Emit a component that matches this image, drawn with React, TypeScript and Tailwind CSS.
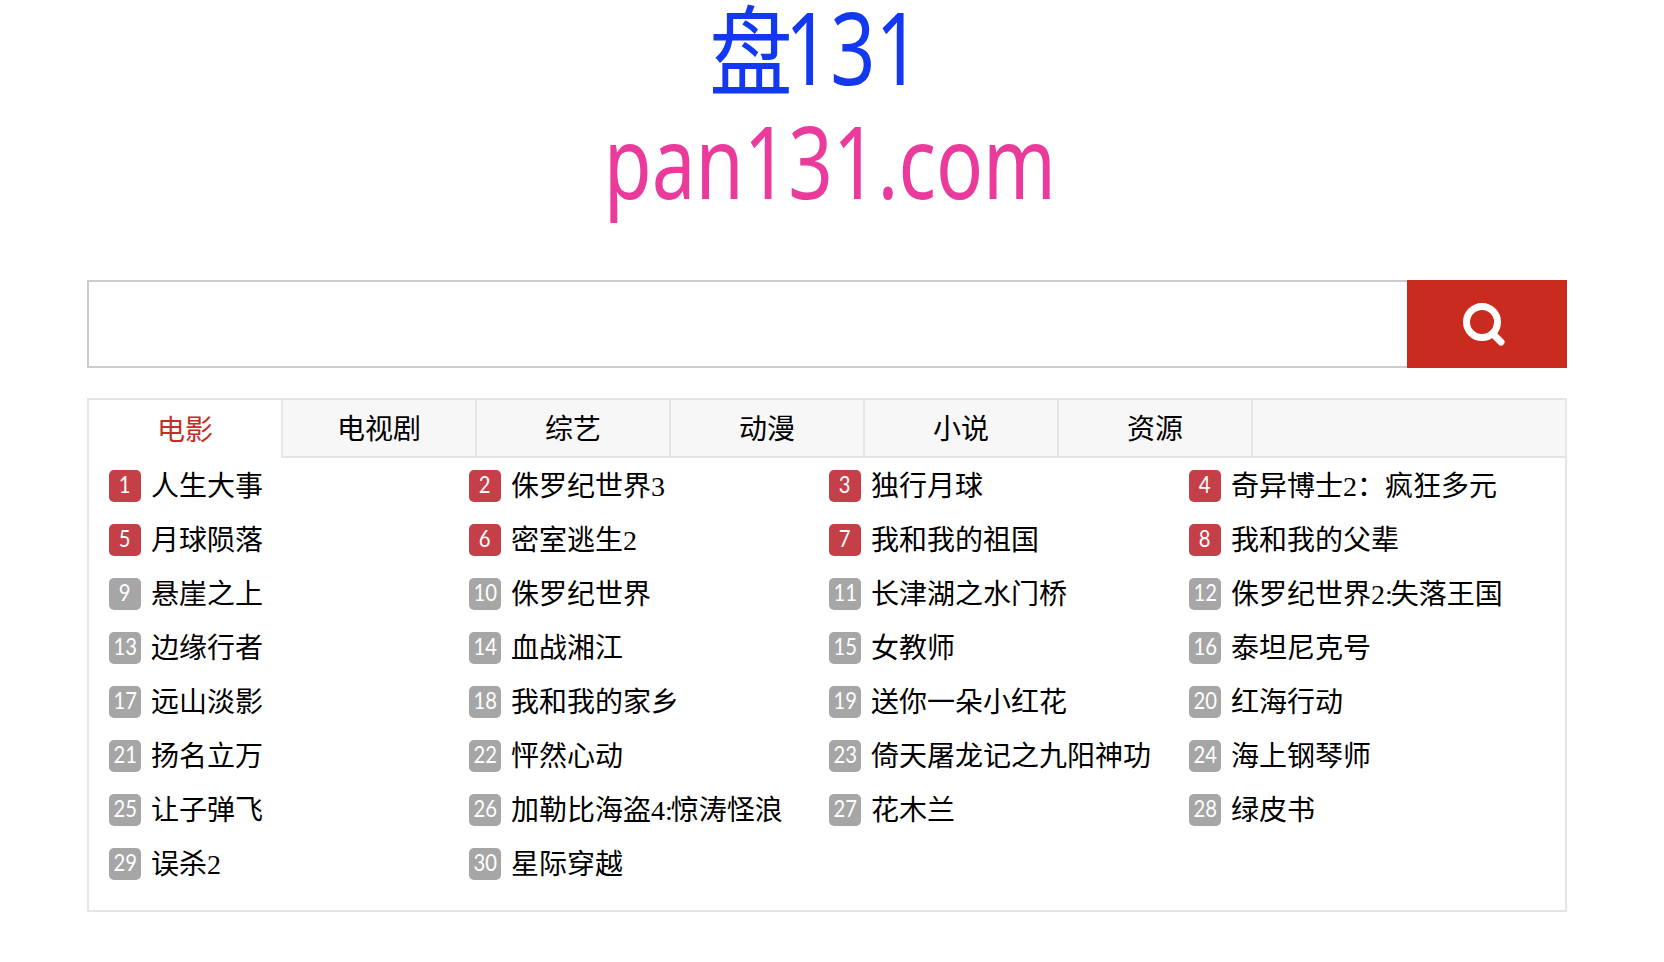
const titles = ["人生大事","侏罗纪世界3","独行月球","奇异博士2：疯狂多元","月球陨落","密室逃生2","我和我的祖国","我和我的父辈","悬崖之上","侏罗纪世界","长津湖之水门桥","侏罗纪世界2:失落王国","边缘行者","血战湘江","女教师","泰坦尼克号","远山淡影","我和我的家乡","送你一朵小红花","红海行动","扬名立万","怦然心动","倚天屠龙记之九阳神功","海上钢琴师","让子弹飞","加勒比海盗4:惊涛怪浪","花木兰","绿皮书","误杀2","星际穿越"];
const tabs = ["电影","电视剧","综艺","动漫","小说","资源"];

function Title({ text }: { text: string }) {
  const parts = text.split(":");
  if (parts.length === 1) return <>{text}</>;
  return (
    <>
      {parts[0]}
      <span className="mr-[-2px]">:</span>
      {parts[1]}
    </>
  );
}

export default function App() {
  return (
    <div className="h-[962px] w-[1664px] overflow-hidden bg-white font-['Liberation_Serif','Noto_Sans_CJK_SC',serif] text-black">
      <div className="flex h-[280px] flex-col items-center font-['Noto_Sans','Noto_Sans_CJK_SC',sans-serif]">
        <div className="mr-[41px] flex h-[100px] items-center text-[#1238f0]">
          <span className="mr-[-15px] inline-block origin-center scale-x-[0.85] text-[98px] leading-[100px]">盘</span>
          <span className="mr-[-36px] mb-[8px] inline-block origin-left scale-x-[0.79] text-[100px] leading-[100px]">131</span>
        </div>
        <div className="mt-[5px] mr-[4px] scale-x-[0.78] text-[100px] leading-[110px] text-[#ea3a9c]">pan131.com</div>
      </div>
      <div className="ml-[87px] flex h-[88px] w-[1480px]">
        <div className="flex-1 border-2 border-r-0 border-[#cccccc]" />
        <button className="flex w-[160px] items-center justify-center bg-[#c92b1e]">
          <svg width="48" height="48" viewBox="0 0 48 48" fill="none" stroke="white" strokeLinecap="round" className="ml-[-3px] mt-[4px]">
            <circle cx="20" cy="20" r="15.5" strokeWidth="7" />
            <path d="M31 32 L39 40" strokeWidth="7" />
          </svg>
        </button>
      </div>
      <div className="ml-[87px] mt-[30px] h-[514px] w-[1480px] border-2 border-[#e5e5e5]">
        <div className="flex h-[58px]">
          {tabs.map((t, i) => (
            <div
              key={t}
              className={
                i === 0
                  ? "flex w-[194px] items-center justify-center border-r-2 border-[#e5e5e5] bg-white pt-[4px] text-[28px] text-[#c0302a]"
                  : "flex w-[194px] items-center justify-center border-r-2 border-b-2 border-[#e5e5e5] bg-[#f7f7f7] pt-[4px] text-[28px]"
              }
            >
              {t}
            </div>
          ))}
          <div className="flex-1 border-b-2 border-[#e5e5e5] bg-[#f7f7f7]" />
        </div>
        <div className="grid grid-cols-[repeat(4,360px)] pl-[20px] pt-[12px]">
          {titles.map((t, i) => (
            <div key={t} className="flex h-[54px] items-start">
              <span
                className={
                  (i < 8 ? "bg-[#c53f49] " : "bg-[#a6a6a6] ") +
                  "flex h-[32px] w-[32px] items-center justify-center rounded-[5px] pb-[3px] font-['Lato',sans-serif] text-[23px] leading-none text-white"
                }
              >
                <span className="inline-block scale-x-[0.88]">{i + 1}</span>
              </span>
              <span className="ml-[10px] mt-[1px] text-[28px] leading-[32px] whitespace-nowrap">
                <Title text={t} />
              </span>
            </div>
          ))}
        </div>
      </div>
    </div>
  );
}
